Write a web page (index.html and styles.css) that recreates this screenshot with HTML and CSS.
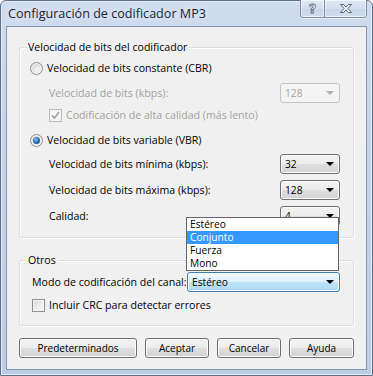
FILE: index.html
```html
<!DOCTYPE html>
<html lang="es">
<head>
  <meta charset="UTF-8" />
  <title>Configuración de codificador MP3</title>
  <link rel="stylesheet" href="styles.css">
</head>
<body>
  <div class="window">
    <div class="titlebar">
      <span class="title">Configuración de codificador MP3</span>
      <div class="caption-buttons">
        <span class="cap-btn help">?</span>
        <span class="cap-btn close">
          <svg width="14" height="11" viewBox="0 0 14 11">
            <path d="M1.5 1.5h3.2L7 4.2 9.3 1.5h3.2L8.9 5.5l3.6 4h-3.2L7 6.8 4.7 9.5H1.5l3.6-4z" fill="#f4f6fa" stroke="#5d6877" stroke-width="1" stroke-linejoin="round"/>
          </svg>
        </span>
      </div>
    </div>

    <div class="client">
      <div class="group group-bitrate">
        <span class="legend">Velocidad de bits del codificador</span>

        <div class="row row-first">
          <span class="radio"></span>
          <span class="text">Velocidad de bits constante (CBR)</span>
        </div>
        <div class="row row-gap5 indent">
          <span class="text disabled">Velocidad de bits (kbps):</span>
          <div class="combo combo-small is-disabled"><span>128</span><i class="arrow"></i></div>
        </div>
        <div class="row row-gap2 indent">
          <span class="check is-disabled checked">
            <svg width="9" height="9" viewBox="0 0 9 9"><path d="M1 4.5l2.3 2.6L8 1" fill="none" stroke="#9a9a9a" stroke-width="1.5"/></svg>
          </span>
          <span class="text disabled">Codificación de alta calidad (más lento)</span>
        </div>
        <div class="row row-gap5">
          <span class="radio checked"></span>
          <span class="text">Velocidad de bits variable (VBR)</span>
        </div>
        <div class="row row-gap4 indent">
          <span class="text">Velocidad de bits mínima (kbps):</span>
          <div class="combo combo-small"><span>32</span><i class="arrow"></i></div>
        </div>
        <div class="row row-gap6 indent">
          <span class="text">Velocidad de bits máxima (kbps):</span>
          <div class="combo combo-small"><span>128</span><i class="arrow"></i></div>
        </div>
        <div class="row row-gap6 indent">
          <span class="text">Calidad:</span>
          <div class="combo combo-small"><span>4</span><i class="arrow"></i></div>
        </div>
      </div>

      <div class="group group-other">
        <span class="legend">Otros</span>
        <div class="row row-first-other">
          <span class="text">Modo de codificación del canal:</span>
          <div class="combo combo-wide is-hot"><span>Estéreo</span><i class="arrow"></i></div>
        </div>
        <div class="row row-gap3">
          <span class="check"></span>
          <span class="text">Incluir CRC para detectar errores</span>
        </div>
      </div>

      <div class="buttons">
        <button class="btn btn-wide">Predeterminados</button>
        <button class="btn">Aceptar</button>
        <button class="btn">Cancelar</button>
        <button class="btn btn-help">Ayuda</button>
      </div>

      <ul class="dropdown">
        <li>Estéreo</li>
        <li class="selected">Conjunto</li>
        <li>Fuerza</li>
        <li>Mono</li>
      </ul>
    </div>
  </div>
</body>
</html>
```

FILE: styles.css
```css
* {
  box-sizing: border-box;
  margin: 0;
  padding: 0;
}

body {
  font-family: 'Open Sans', 'Liberation Sans', sans-serif;
  font-size: 10.6px;
  color: #000;
  background: #fff;
}

.window {
  width: 373px;
  height: 376px;
  background: linear-gradient(180deg, #cfdcef 0%, #c3d3ea 40%, #bccee7 100%);
  border: 1px solid #5f6f86;
  border-radius: 6px 6px 0 0;
  box-shadow: inset 0 0 0 1px #e4ecf7;
  padding: 0 5px 5px 5px;
  display: flex;
  flex-direction: column;
}

/* barra de titulo */
.titlebar {
  height: 25px;
  display: flex;
  align-items: flex-start;
}

.title {
  font-size: 12.6px;
  color: #1c2430;
  margin: 4px 0 0 2px;
  text-shadow: 0 0 6px #eef3fa;
}

.caption-buttons {
  margin-left: auto;
  margin-top: -1px;
  display: flex;
  height: 18px;
  border: 1px solid #7d8ca3;
  border-top: none;
  border-radius: 0 0 4px 4px;
  overflow: hidden;
  box-shadow: 0 1px 0 #e6edf7;
}

.cap-btn {
  display: flex;
  align-items: center;
  justify-content: center;
  height: 100%;
  background: linear-gradient(180deg, #dfe8f4 0%, #d3deee 50%, #c7d5ea 51%, #cfdcef 100%);
  box-shadow: inset 0 0 0 1px rgba(255, 255, 255, 0.55);
}

.help {
  width: 24px;
  border-right: 1px solid #7d8ca3;
  font-family: 'DejaVu Sans', sans-serif;
  font-weight: bold;
  font-size: 13px;
  color: #f4f6fa;
  -webkit-text-stroke: 0.8px #5d6877;
}

.close {
  width: 41px;
}

/* area cliente */
.client {
  position: relative;
  height: 344px;
  background: #f0f0f0;
  border: 1px solid #8596b0;
  padding: 20px 12px 0 12px;
}

.group {
  position: relative;
  border: 1px solid #d5dfe5;
  border-radius: 3px;
  box-shadow: inset 1px 1px 0 #fff, 1px 1px 0 #fff;
  display: flex;
  flex-direction: column;
}

.legend {
  position: absolute;
  top: -8px;
  left: 6px;
  padding: 0 2px;
  background: #f0f0f0;
  line-height: 14px;
}

.group-bitrate {
  height: 191px;
  padding: 10px 13px 0 10px;
}

.group-other {
  height: 66px;
  margin-top: 22px;
  padding: 11px 13px 0 12px;
}

.row {
  height: 20px;
  display: flex;
  align-items: center;
}

.row-first-other { margin-top: 0; }
.row-gap2 { margin-top: 2px; }
.row-gap3 { margin-top: 3px; }
.row-gap4 { margin-top: 4px; }
.row-gap5 { margin-top: 5px; }
.row-gap6 { margin-top: 6px; }

.indent {
  padding-left: 19px;
}

.text {
  line-height: 14px;
  white-space: nowrap;
}

.text.disabled {
  color: #a2a2a2;
}

.radio + .text,
.check + .text {
  margin-left: 4px;
}

/* radio y checkbox */
.radio {
  width: 13px;
  height: 13px;
  border-radius: 50%;
  border: 1px solid #8c8c8c;
  background: radial-gradient(circle at 60% 65%, #f7f7f7 0%, #dedede 60%, #c9c9c9 100%);
  box-shadow: inset 0 0 0 1px #f4f4f4;
  position: relative;
}

.radio.checked::after {
  content: '';
  position: absolute;
  left: 2px;
  top: 2px;
  width: 7px;
  height: 7px;
  border-radius: 50%;
  background: radial-gradient(circle at 40% 35%, #8ec6ef 0%, #2e76b7 45%, #0e3a6b 100%);
}

.check {
  width: 13px;
  height: 13px;
  border: 1px solid #8e8f8f;
  background: linear-gradient(135deg, #d8d8d8 0%, #f2f2f2 70%, #fbfbfb 100%);
  box-shadow: inset 0 0 0 1px #f4f4f4;
  display: flex;
  align-items: center;
  justify-content: center;
}

.check.is-disabled {
  border-color: #bcbcbc;
  background: #f4f4f4;
}

/* combos */
.combo {
  margin-left: auto;
  height: 20px;
  border: 1px solid #707070;
  border-radius: 3px;
  background: linear-gradient(180deg, #f3f3f3 0%, #ececec 48%, #dedede 52%, #d2d2d2 100%);
  box-shadow: inset 0 0 0 1px #fbfbfb;
  display: flex;
  align-items: center;
  padding: 0 5px 0 4px;
  line-height: 14px;
  font-size: 10.2px;
}

.combo-small { width: 60px; }
.combo-wide { width: 153px; }

.arrow {
  margin-left: auto;
  width: 0;
  height: 0;
  border-left: 4px solid transparent;
  border-right: 4px solid transparent;
  border-top: 4px solid #000;
}

.combo.is-disabled {
  border-color: #c2c6ca;
  background: #f4f4f4;
  box-shadow: none;
  color: #a2a2a2;
}

.combo.is-disabled .arrow {
  border-top-color: #b0b0b0;
}

.combo.is-hot {
  border-color: #3c7fb1;
  background: linear-gradient(180deg, #f1f9fe 0%, #dcf1fd 48%, #bfe4f9 52%, #a9d8f3 100%);
  box-shadow: inset 0 0 0 1px #fafdff;
}

/* botones */
.buttons {
  display: flex;
  gap: 8px;
  margin-top: 12px;
}

.btn {
  width: 64px;
  height: 20px;
  font-family: inherit;
  font-size: 10px;
  color: #000;
  border: 1px solid #707070;
  border-radius: 3px;
  background: linear-gradient(180deg, #f4f4f4 0%, #ececec 48%, #dfdfdf 52%, #d2d2d2 100%);
  box-shadow: inset 0 0 0 1px #fcfcfc;
}

.btn-wide { width: 118px; }
.btn-help { width: 65px; }

/* lista desplegable */
.dropdown {
  position: absolute;
  left: 179px;
  top: 190px;
  width: 153px;
  list-style: none;
  background: #fff;
  border: 1px solid #646464;
  padding: 0;
}

.dropdown li {
  height: 13px;
  line-height: 13px;
  padding-left: 3px;
  font-size: 10.2px;
}

.dropdown li.selected {
  background: #3399ff;
  color: #fff;
}
```
